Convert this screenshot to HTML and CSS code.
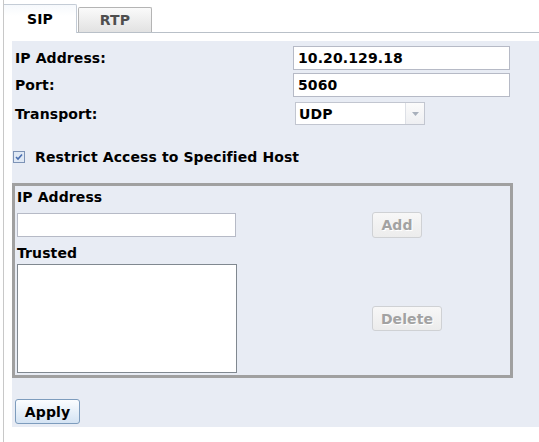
FILE: index.html
```html
<!DOCTYPE html>
<html>
<head>
<meta charset="utf-8">
<link rel="stylesheet" href="styles.css">
</head>
<body>
<div class="page">
  <div class="tabs">
    <div class="tab active">SIP</div>
    <div class="tab">RTP</div>
  </div>
  <div class="body">
    <div class="panel">
      <div class="grid">
        <label class="lbl">IP Address:</label>
        <input class="field" type="text" value="10.20.129.18">
        <label class="lbl">Port:</label>
        <input class="field" type="text" value="5060">
        <label class="lbl sel-lbl">Transport:</label>
        <div class="select">
          <span class="sel-text">UDP</span>
          <span class="sel-btn"><svg width="7" height="4" viewBox="0 0 7 4"><path d="M0 0H7L3.5 4Z" fill="#a8b0bc"/></svg></span>
        </div>
      </div>
      <div class="check-row">
        <span class="cbox"><svg width="12" height="12" viewBox="0 0 12 12"><rect x="0.5" y="0.5" width="11" height="11" fill="#dfe8f4" stroke="#7d93b6"/><path d="M3 6L5 8L9 3.5" fill="none" stroke="#4a6fb0" stroke-width="1.6"/></svg></span>
        <span class="check-text">Restrict Access to Specified Host</span>
      </div>
      <div class="box">
        <div class="blbl first">IP Address</div>
        <div class="brow">
          <input class="bfield" type="text">
          <button class="btn dis add">Add</button>
        </div>
        <div class="blbl second">Trusted</div>
        <div class="brow">
          <div class="list"></div>
          <button class="btn dis del">Delete</button>
        </div>
      </div>
      <button class="btn apply">Apply</button>
    </div>
  </div>
</div>
</body>
</html>
```
FILE: styles.css
```css
html, body { margin: 0; padding: 0; background: #fff; }
body { font-family: "DejaVu Sans", Verdana, sans-serif; font-size: 14px; letter-spacing: 0.1px; font-weight: bold; color: #000; }
.page { margin-left: 3px; border-left: 1px solid #c8c8c8; height: 442px; box-sizing: border-box; padding-top: 4px; }
.tabs { display: flex; align-items: flex-end; height: 28px; border-bottom: 1px solid #b9c0c8; }
.tab { box-sizing: border-box; display: flex; align-items: center; justify-content: center; }
.tab.active { width: 73px; height: 29px; margin-bottom: -1px; background: linear-gradient(#f6f9fc, #fff 40%); border-top: 1px solid #c4ccd6; border-right: 1px solid #c4ccd6; border-top-right-radius: 2px; padding-bottom: 1px; }
.tab:not(.active) { width: 74px; height: 25px; margin-left: 1px; background: linear-gradient(#fafafa, #e2e2e2); border: 1px solid #b4b4b4; border-bottom: none; border-radius: 2px 2px 0 0; color: #4e4e4e; }
.body { padding: 8px 0 0 8px; }
.panel { background: #e8ecf4; padding: 5px 0 3px 3px; }
.grid { display: grid; grid-template-columns: 278px 217px; row-gap: 3px; align-items: center; }
.lbl { line-height: 16px; }
.field { box-sizing: border-box; width: 217px; height: 24px; border: 1px solid #b6bac6; background: #fff; font: inherit; letter-spacing: inherit; padding: 0 4px; margin: 0; color: #000; }
.sel-lbl { margin-top: 2px; }
.select { box-sizing: border-box; margin: 2px 0 0 2px; width: 130px; height: 23px; border: 1px solid #c2c6d0; background: #fff; display: flex; align-items: stretch; }
.sel-text { flex: 1; display: flex; align-items: center; padding-left: 3px; }
.sel-btn { width: 18px; border-left: 1px solid #dde0e6; background: linear-gradient(#fbfbfb, #eeeff2); display: flex; align-items: center; justify-content: center; }
.check-row { display: flex; align-items: center; height: 16px; margin: 24px 0 0 -2px; }
.cbox { width: 12px; height: 12px; display: flex; }
.check-text { margin-left: 10px; line-height: 16px; }
.box { margin: 18px 0 0 -3px; width: 501px; box-sizing: border-box; border: 3px solid #a0a0a0; padding: 3px 0 2px 2px; }
.blbl { line-height: 16px; }
.blbl.first { margin-bottom: 7px; }
.blbl.second { margin: 7px 0 3px; }
.brow { display: flex; align-items: center; }
.bfield { box-sizing: border-box; width: 219px; height: 24px; border: 1px solid #b6bac6; background: #fff; margin: 0; padding: 0 4px; font: inherit; }
.list { box-sizing: border-box; width: 220px; height: 109px; border: 1px solid #808890; background: #fff; }
.btn { box-sizing: border-box; font: inherit; letter-spacing: inherit; margin: 0; padding: 0; border-radius: 3px; cursor: default; }
.dis { border: 1px solid #cfd1d4; background: linear-gradient(#f7f7f7, #ececec); color: #a2a2a2; text-shadow: 1px 1px 0 #fff; }
.add { width: 50px; height: 26px; margin-left: 136px; }
.del { width: 70px; height: 25px; margin-left: 135px; }
.apply { margin-top: 21px; width: 65px; height: 25px; border: 1px solid #7d9cbd; background: linear-gradient(#fbfdff, #d4e3f3); color: #000; }
```
